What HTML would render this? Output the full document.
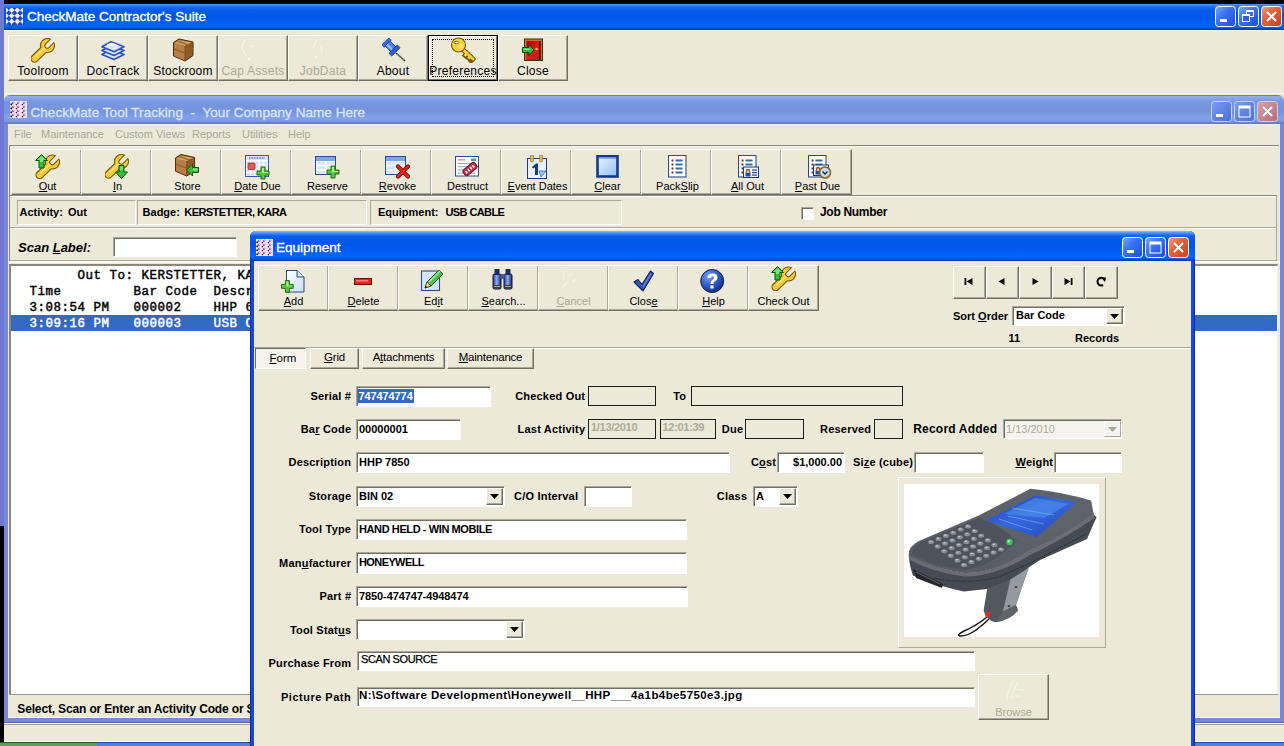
<!DOCTYPE html>
<html><head><meta charset="utf-8"><style>*{margin:0;padding:0;box-sizing:border-box}
html,body{width:1284px;height:746px;overflow:hidden;background:#000;position:relative;font-family:"Liberation Sans",sans-serif;color:#000}
.a{position:absolute}
.t{position:absolute;white-space:pre;line-height:1}
.btn{position:absolute;background:#ECE9D8;border-top:1px solid #fff;border-left:1px solid #fff;border-right:1px solid #716F64;border-bottom:1px solid #716F64;box-shadow:inset -1px -1px 0 #ACA899}
.lb{position:absolute;left:0;right:0;text-align:center;white-space:pre;line-height:1;font-size:11px}
.ic{position:absolute}
.sunk{position:absolute;background:#fff;border-top:1px solid #ACA899;border-left:1px solid #ACA899;border-right:1px solid #fff;border-bottom:1px solid #fff;box-shadow:inset 1px 1px 0 #716F64}
.panel{position:absolute;border-top:1px solid #ACA899;border-left:1px solid #ACA899;border-right:1px solid #fff;border-bottom:1px solid #fff}
.lbl{position:absolute;white-space:pre;line-height:1;font-weight:bold;font-size:11px}
.fld{position:absolute;white-space:pre;line-height:1;font-weight:bold;font-size:11px}
.u{text-decoration:underline;text-underline-offset:1px}
.mono{position:absolute;white-space:pre;line-height:1;font-family:"Liberation Mono",monospace;font-size:13.333px}
</style></head><body>
<div class="a" style="left:0px;top:0px;width:4px;height:526px;background:#6E79D6;"></div>
<div class="a" style="left:4px;top:4px;width:1280px;height:26px;background:linear-gradient(#5C9CFF 0,#2A78F8 2px,#0A5EEC 5px,#0055E5 12px,#005EF4 18px,#0066FF 22px,#0058E8 24px,#0030A0 26px);"></div>
<div class="ic" style="left:6px;top:8px"><svg width="17" height="17" viewBox="0 0 17 17" style="display:block"><defs><clipPath id="aic"><rect x="0" y="0" width="17" height="17"/></clipPath></defs><g clip-path="url(#aic)"><rect x="0" y="0" width="17" height="17" fill="#F4EEFF"/><g transform="rotate(45 8.5 8.5)"><rect x="-12.00" y="-12.00" width="4.0" height="4.0" fill="#2448C0"/><rect x="-12.00" y="-4.00" width="4.0" height="4.0" fill="#2448C0"/><rect x="-12.00" y="4.00" width="4.0" height="4.0" fill="#2448C0"/><rect x="-12.00" y="12.00" width="4.0" height="4.0" fill="#2448C0"/><rect x="-12.00" y="20.00" width="4.0" height="4.0" fill="#2448C0"/><rect x="-8.00" y="-8.00" width="4.0" height="4.0" fill="#2448C0"/><rect x="-8.00" y="0.00" width="4.0" height="4.0" fill="#2448C0"/><rect x="-8.00" y="8.00" width="4.0" height="4.0" fill="#2448C0"/><rect x="-8.00" y="16.00" width="4.0" height="4.0" fill="#2448C0"/><rect x="-8.00" y="24.00" width="4.0" height="4.0" fill="#2448C0"/><rect x="-4.00" y="-12.00" width="4.0" height="4.0" fill="#2448C0"/><rect x="-4.00" y="-4.00" width="4.0" height="4.0" fill="#2448C0"/><rect x="-4.00" y="4.00" width="4.0" height="4.0" fill="#2448C0"/><rect x="-4.00" y="12.00" width="4.0" height="4.0" fill="#2448C0"/><rect x="-4.00" y="20.00" width="4.0" height="4.0" fill="#2448C0"/><rect x="0.00" y="-8.00" width="4.0" height="4.0" fill="#2448C0"/><rect x="0.00" y="0.00" width="4.0" height="4.0" fill="#2448C0"/><rect x="0.00" y="8.00" width="4.0" height="4.0" fill="#2448C0"/><rect x="0.00" y="16.00" width="4.0" height="4.0" fill="#2448C0"/><rect x="0.00" y="24.00" width="4.0" height="4.0" fill="#2448C0"/><rect x="4.00" y="-12.00" width="4.0" height="4.0" fill="#2448C0"/><rect x="4.00" y="-4.00" width="4.0" height="4.0" fill="#2448C0"/><rect x="4.00" y="4.00" width="4.0" height="4.0" fill="#2448C0"/><rect x="4.00" y="12.00" width="4.0" height="4.0" fill="#2448C0"/><rect x="4.00" y="20.00" width="4.0" height="4.0" fill="#2448C0"/><rect x="8.00" y="-8.00" width="4.0" height="4.0" fill="#2448C0"/><rect x="8.00" y="0.00" width="4.0" height="4.0" fill="#2448C0"/><rect x="8.00" y="8.00" width="4.0" height="4.0" fill="#2448C0"/><rect x="8.00" y="16.00" width="4.0" height="4.0" fill="#2448C0"/><rect x="8.00" y="24.00" width="4.0" height="4.0" fill="#2448C0"/><rect x="12.00" y="-12.00" width="4.0" height="4.0" fill="#2448C0"/><rect x="12.00" y="-4.00" width="4.0" height="4.0" fill="#2448C0"/><rect x="12.00" y="4.00" width="4.0" height="4.0" fill="#2448C0"/><rect x="12.00" y="12.00" width="4.0" height="4.0" fill="#2448C0"/><rect x="12.00" y="20.00" width="4.0" height="4.0" fill="#2448C0"/><rect x="16.00" y="-8.00" width="4.0" height="4.0" fill="#2448C0"/><rect x="16.00" y="0.00" width="4.0" height="4.0" fill="#2448C0"/><rect x="16.00" y="8.00" width="4.0" height="4.0" fill="#2448C0"/><rect x="16.00" y="16.00" width="4.0" height="4.0" fill="#2448C0"/><rect x="16.00" y="24.00" width="4.0" height="4.0" fill="#2448C0"/><rect x="20.00" y="-12.00" width="4.0" height="4.0" fill="#2448C0"/><rect x="20.00" y="-4.00" width="4.0" height="4.0" fill="#2448C0"/><rect x="20.00" y="4.00" width="4.0" height="4.0" fill="#2448C0"/><rect x="20.00" y="12.00" width="4.0" height="4.0" fill="#2448C0"/><rect x="20.00" y="20.00" width="4.0" height="4.0" fill="#2448C0"/><rect x="24.00" y="-8.00" width="4.0" height="4.0" fill="#2448C0"/><rect x="24.00" y="0.00" width="4.0" height="4.0" fill="#2448C0"/><rect x="24.00" y="8.00" width="4.0" height="4.0" fill="#2448C0"/><rect x="24.00" y="16.00" width="4.0" height="4.0" fill="#2448C0"/><rect x="24.00" y="24.00" width="4.0" height="4.0" fill="#2448C0"/></g></g></svg></div>
<div class="t" style="left:27px;top:9.97px;font-size:13.5px;color:#fff;-webkit-text-stroke:0.35px #fff;">CheckMate Contractor's Suite</div>
<div class="ic" style="left:1215px;top:6px"><svg width="21" height="21" viewBox="0 0 21 21" style="display:block"><defs><linearGradient id="gmina" x1="0" y1="0" x2="1" y2="1"><stop offset="0" stop-color="#7AA8FF"/><stop offset="0.4" stop-color="#3A74F0"/><stop offset="1" stop-color="#1C4CD8"/></linearGradient></defs><rect x="0.5" y="0.5" width="20" height="20" rx="3" fill="url(#gmina)" stroke="#FFFFFF" stroke-width="1"/><rect x="5" y="13" width="7" height="3" fill="#fff"/></svg></div>
<div class="ic" style="left:1238px;top:6px"><svg width="21" height="21" viewBox="0 0 21 21" style="display:block"><defs><linearGradient id="grestorea" x1="0" y1="0" x2="1" y2="1"><stop offset="0" stop-color="#7AA8FF"/><stop offset="0.4" stop-color="#3A74F0"/><stop offset="1" stop-color="#1C4CD8"/></linearGradient></defs><rect x="0.5" y="0.5" width="20" height="20" rx="3" fill="url(#grestorea)" stroke="#FFFFFF" stroke-width="1"/><rect x="8.5" y="4.5" width="7" height="6" fill="none" stroke="#fff"/><rect x="8" y="4" width="8" height="2" fill="#fff"/><rect x="4.5" y="8.5" width="7" height="7" fill="#2A60E8" stroke="#fff"/><rect x="4" y="8" width="8" height="2" fill="#fff"/></svg></div>
<div class="ic" style="left:1261px;top:6px"><svg width="21" height="21" viewBox="0 0 21 21" style="display:block"><defs><linearGradient id="gclosea" x1="0" y1="0" x2="1" y2="1"><stop offset="0" stop-color="#F0A080"/><stop offset="0.4" stop-color="#E2643C"/><stop offset="1" stop-color="#C8401A"/></linearGradient></defs><rect x="0.5" y="0.5" width="20" height="20" rx="3" fill="url(#gclosea)" stroke="#FFFFFF" stroke-width="1"/><path d="M6 6 L15 15 M15 6 L6 15" stroke="#fff" stroke-width="2"/></svg></div>
<div class="a" style="left:4px;top:30px;width:1280px;height:712px;background:#ECE9D8;"></div>
<div class="a" style="left:4px;top:30px;width:1280px;height:1px;background:#F4F8FA;"></div>
<div class="btn" style="left:8px;top:35px;width:70px;height:46px"></div>
<div class="lb" style="left:8px;width:70px;top:64.84px;font-size:12px;color:#000;letter-spacing:0.25px">Toolroom</div>
<div class="ic" style="left:31px;top:37.5px"><svg width="24" height="25" viewBox="0 0 24 25" style="display:block"><defs><mask id="wmo1" maskUnits="userSpaceOnUse" x="-5" y="-5" width="40" height="40"><rect x="-5" y="-5" width="40" height="40" fill="#fff"/><path d="M17.54 9.14 A1.9 1.9 0 0 1 14.86 6.46 L23.34 -2.03 L26.03 0.66 Z" fill="#000"/></mask><mask id="wmi1" maskUnits="userSpaceOnUse" x="-5" y="-5" width="40" height="40"><rect x="-5" y="-5" width="40" height="40" fill="#fff"/><path d="M18.32 9.92 A3.0 3.0 0 0 1 14.08 5.68 L22.56 -2.81 L26.81 1.44 Z" fill="#000"/></mask></defs><g transform="translate(0,0) scale(1.0)"><g mask="url(#wmo1)"><circle cx="16.5" cy="7.5" r="7.6" fill="#7A5800"/><path d="M3.6 20.6 L14 10.5" stroke="#7A5800" stroke-width="8.4" stroke-linecap="round"/></g><g mask="url(#wmi1)"><circle cx="16.5" cy="7.5" r="6.5" fill="#F2CB3C"/><path d="M3.6 20.6 L14 10.5" stroke="#F2CB3C" stroke-width="6.0" stroke-linecap="round"/><path d="M5 18 L13 10.5" stroke="#FBE27A" stroke-width="1.6" stroke-linecap="round"/></g></g></svg></div>
<div class="btn" style="left:78px;top:35px;width:70px;height:46px"></div>
<div class="lb" style="left:78px;width:70px;top:64.84px;font-size:12px;color:#000;letter-spacing:0.25px">DocTrack</div>
<div class="ic" style="left:101px;top:41px"><svg width="24" height="20" viewBox="0 0 24 20" style="display:block"><g transform="translate(0,0)"><path d="M1 13.5 L10 8.5 L23 13.5 L13 18.5 Z" fill="#D8E8FF" stroke="#2A52B8" stroke-width="1.6" stroke-linejoin="round"/><path d="M1 9.5 L10 4.5 L23 9.5 L13 14.5 Z" fill="#D8E8FF" stroke="#2A52B8" stroke-width="1.6" stroke-linejoin="round"/><path d="M1 5.8 L10 0.8 L23 5.8 L13 10.8 Z" fill="#D8E8FF" stroke="#2A52B8" stroke-width="1.6" stroke-linejoin="round"/><path d="M6 4 L11 2.5 L17 5" stroke="#fff" stroke-width="1.5" fill="none"/></g></svg></div>
<div class="btn" style="left:148px;top:35px;width:70px;height:46px"></div>
<div class="lb" style="left:148px;width:70px;top:64.84px;font-size:12px;color:#000;letter-spacing:0.25px">Stockroom</div>
<div class="ic" style="left:173px;top:37.5px"><svg width="21" height="24" viewBox="0 0 21 24" style="display:block"><g transform="translate(0,0.5) scale(1)"><path d="M0.5 4 L6 0.5 L20 3.5 L20 17 L12 22.5 L0.5 17.5 Z" fill="#8E5A26" stroke="#4A2808" stroke-width="1"/><path d="M1 4.2 L12 8 L12 22 L1 17.2 Z" fill="#B88048"/><path d="M1.5 4.5 L6 1.5 L19 4 L12 7.5 Z" fill="#D4A468"/><path d="M12 8 L19.5 4" stroke="#7A4A18" stroke-width="1"/><path d="M12 8 L12 22" stroke="#7A4A18" stroke-width="1"/><path d="M1 10.5 L12 14.5 L20 10" stroke="#8A5A24" stroke-width="1.2" fill="none"/><path d="M4 2.5 L16 6.5" stroke="#9A6A30" stroke-width="1.5"/></g></svg></div>
<div class="btn" style="left:218px;top:35px;width:70px;height:46px"></div>
<div class="lb" style="left:218px;width:70px;top:64.84px;font-size:12px;color:#ACA899;letter-spacing:0.25px">Cap Assets</div>
<div class="ic" style="left:238px;top:37px"><svg width="26" height="26" viewBox="0 0 26 26" style="display:block"><path d="M7 3 Q3 8 5 13 Q6 17 9 19" stroke="#F6F4EC" stroke-width="1.4" fill="none"/><path d="M12 10 L16 9" stroke="#F6F4EC" stroke-width="1.2"/><circle cx="11" cy="22" r="1.2" fill="#F6F4EC"/></svg></div>
<div class="btn" style="left:288px;top:35px;width:70px;height:46px"></div>
<div class="lb" style="left:288px;width:70px;top:64.84px;font-size:12px;color:#ACA899;letter-spacing:0.25px">JobData</div>
<div class="ic" style="left:308px;top:37px"><svg width="26" height="26" viewBox="0 0 26 26" style="display:block"><path d="M9 3 Q5 7 6 12" stroke="#F6F4EC" stroke-width="1.4" fill="none"/><path d="M13 9 L14 15" stroke="#F6F4EC" stroke-width="1.2"/><circle cx="8" cy="20" r="1.2" fill="#F6F4EC"/></svg></div>
<div class="btn" style="left:358px;top:35px;width:70px;height:46px"></div>
<div class="lb" style="left:358px;width:70px;top:64.84px;font-size:12px;color:#000;letter-spacing:0.25px">About</div>
<div class="ic" style="left:382px;top:38px"><svg width="24" height="24" viewBox="0 0 24 24" style="display:block"><path d="M14 15 L23 23" stroke="#3A3A3A" stroke-width="1.6"/><path d="M15 16 L22 22" stroke="#A0A0A0" stroke-width="0.6"/><g transform="rotate(-45 9 9)"><rect x="4" y="1" width="10" height="3.5" rx="1" fill="#3E6CE0" stroke="#1A3A9A" stroke-width="0.8"/><rect x="5.5" y="4" width="7" height="8" fill="#4A7CEA" stroke="#1A3A9A" stroke-width="0.8"/><rect x="3" y="12" width="12" height="4" rx="1" fill="#2F5CD0" stroke="#1A3A9A" stroke-width="0.8"/><rect x="7" y="4.5" width="2" height="7" fill="#9EC0FF"/></g></svg></div>
<div class="btn" style="left:428px;top:35px;width:70px;height:46px;border:1px solid #000;box-shadow:inset -1px -1px 0 #716F64,inset 1px 1px 0 #fff"></div>
<div class="a" style="left:432px;top:39px;width:62px;height:38px;border:1px dotted #000"></div>
<div class="lb" style="left:428px;width:70px;top:64.84px;font-size:12px;color:#000;letter-spacing:0.25px">Preferences</div>
<div class="ic" style="left:449.5px;top:36.5px"><svg width="26" height="26" viewBox="0 0 26 26" style="display:block"><path d="M10 10 L23 22 M17 16 L15 18.5 M20 19 L18.5 21 M23 22 L21 24" stroke="#7A5A00" stroke-width="4.6" stroke-linecap="square"/><path d="M10 10 L23 22 M17 16 L15.5 18 M20 19 L19 20.5" stroke="#F4D23A" stroke-width="2.6" stroke-linecap="square"/><circle cx="8.5" cy="8" r="7" fill="#F4D23A" stroke="#7A5A00" stroke-width="1.1"/><ellipse cx="6.5" cy="5.5" rx="2.3" ry="1.3" fill="#fff" stroke="#7A5A00" stroke-width="0.8"/><circle cx="11" cy="10" r="3" fill="#FFE680" opacity="0.6"/></svg></div>
<div class="btn" style="left:498px;top:35px;width:70px;height:46px"></div>
<div class="lb" style="left:498px;width:70px;top:64.84px;font-size:12px;color:#000;letter-spacing:0.25px">Close</div>
<div class="ic" style="left:521.5px;top:38px"><svg width="24" height="24" viewBox="0 0 24 24" style="display:block"><defs><linearGradient id="dg" x1="0" y1="0" x2="1" y2="1"><stop offset="0" stop-color="#A00000"/><stop offset="0.5" stop-color="#E01818"/><stop offset="1" stop-color="#B02020"/></linearGradient></defs><rect x="2.5" y="1" width="18" height="21.5" fill="#C07820" stroke="#4A2A00" stroke-width="1"/><rect x="4.5" y="3" width="14" height="19" fill="url(#dg)"/><rect x="17" y="3" width="1.6" height="19" fill="#3A0A0A"/><circle cx="14.5" cy="11" r="1.3" fill="#FFB040"/><path d="M0.5 9.5 L7 9.5 L7 6.5 L12 12 L7 17.5 L7 14.5 L0.5 14.5 Z" fill="#3CB83C" stroke="#0A4A0A" stroke-width="1"/><path d="M1.5 10.5 L7.5 10.5 L7.5 12 L1.5 12Z" fill="#8BE88B"/></svg></div>
<div class="a" style="left:4px;top:95px;width:1280px;height:628px;background:#7A86D8;border-radius:7px 7px 0 0;"></div>
<div class="a" style="left:4px;top:93px;width:1280px;height:1px;background:#F6F6F2;"></div>
<div class="a" style="left:4px;top:95px;width:1280px;height:29px;background:linear-gradient(#6C7EAE 0,#6C7EAE 1px,#94AEEC 1px,#8AA6E8 3px,#7896DE 7px,#7694DE 17px,#80A2EA 23px,#7E9CE4 26px,#6A7AC0 28px,#6A7AC0 29px);border-radius:6px 6px 0 0;"></div>
<div class="ic" style="left:10px;top:101px"><svg width="17" height="17" viewBox="0 0 17 17" style="display:block"><rect x="0" y="0" width="17" height="17" fill="#F6DCF6"/><path d="M1 4 L4 1" stroke="#1A1030" stroke-width="1.4" stroke-dasharray="1.2 0.8"/><path d="M1 8 L4 5" stroke="#1A1030" stroke-width="1.4" stroke-dasharray="1.2 0.8"/><path d="M1 12 L4 9" stroke="#1A1030" stroke-width="1.4" stroke-dasharray="1.2 0.8"/><path d="M1 16 L4 13" stroke="#1A1030" stroke-width="1.4" stroke-dasharray="1.2 0.8"/><path d="M6 4 L9 1" stroke="#1A1030" stroke-width="1.4" stroke-dasharray="1.2 0.8"/><path d="M6 8 L9 5" stroke="#1A1030" stroke-width="1.4" stroke-dasharray="1.2 0.8"/><path d="M6 12 L9 9" stroke="#1A1030" stroke-width="1.4" stroke-dasharray="1.2 0.8"/><path d="M6 16 L9 13" stroke="#1A1030" stroke-width="1.4" stroke-dasharray="1.2 0.8"/><path d="M12 4 L15 1" stroke="#1A1030" stroke-width="1.4" stroke-dasharray="1.2 0.8"/><path d="M12 8 L15 5" stroke="#1A1030" stroke-width="1.4" stroke-dasharray="1.2 0.8"/><path d="M12 12 L15 9" stroke="#1A1030" stroke-width="1.4" stroke-dasharray="1.2 0.8"/><path d="M12 16 L15 13" stroke="#1A1030" stroke-width="1.4" stroke-dasharray="1.2 0.8"/><rect x="0.5" y="2.5" width="1.5" height="1.5" fill="#1A1030"/><rect x="0.5" y="6.5" width="1.5" height="1.5" fill="#1A1030"/><rect x="0.5" y="10.5" width="1.5" height="1.5" fill="#1A1030"/><rect x="0.5" y="14.5" width="1.5" height="1.5" fill="#1A1030"/></svg></div>
<div class="t" style="left:30.5px;top:105.77px;font-size:13.5px;color:#DCE6F8;-webkit-text-stroke:0.3px #DCE6F8;letter-spacing:0.05px;">CheckMate Tool Tracking  -  Your Company Name Here</div>
<div class="ic" style="left:1211px;top:101px"><svg width="21" height="21" viewBox="0 0 21 21" style="display:block"><defs><linearGradient id="gmini" x1="0" y1="0" x2="1" y2="1"><stop offset="0" stop-color="#7A9CF0"/><stop offset="1" stop-color="#4A6ED8"/></linearGradient></defs><rect x="0.5" y="0.5" width="20" height="20" rx="3" fill="url(#gmini)" stroke="#C8D4F4" stroke-width="1"/><rect x="5" y="13" width="7" height="3" fill="#fff"/></svg></div>
<div class="ic" style="left:1234px;top:101px"><svg width="21" height="21" viewBox="0 0 21 21" style="display:block"><defs><linearGradient id="gmaxi" x1="0" y1="0" x2="1" y2="1"><stop offset="0" stop-color="#7A9CF0"/><stop offset="1" stop-color="#4A6ED8"/></linearGradient></defs><rect x="0.5" y="0.5" width="20" height="20" rx="3" fill="url(#gmaxi)" stroke="#C8D4F4" stroke-width="1"/><rect x="5" y="5" width="11" height="11" fill="none" stroke="#fff" stroke-width="1"/><rect x="5" y="5" width="11" height="2.5" fill="#fff"/></svg></div>
<div class="ic" style="left:1257px;top:101px"><svg width="21" height="21" viewBox="0 0 21 21" style="display:block"><defs><linearGradient id="gclosei" x1="0" y1="0" x2="1" y2="1"><stop offset="0" stop-color="#D8A0A8"/><stop offset="1" stop-color="#B86A78"/></linearGradient></defs><rect x="0.5" y="0.5" width="20" height="20" rx="3" fill="url(#gclosei)" stroke="#C8D4F4" stroke-width="1"/><path d="M6 6 L15 15 M15 6 L6 15" stroke="#fff" stroke-width="2"/></svg></div>
<div class="a" style="left:8px;top:124px;width:1272px;height:594px;background:#ECE9D8;"></div>
<div class="a" style="left:8px;top:124px;width:1272px;height:1px;background:#EEF0F6;"></div>
<div class="t" style="left:14px;top:128.59px;font-size:11px;color:#A9A79C;">File</div>
<div class="t" style="left:41px;top:128.59px;font-size:11px;color:#A9A79C;">Maintenance</div>
<div class="t" style="left:115px;top:128.59px;font-size:11px;color:#A9A79C;">Custom Views</div>
<div class="t" style="left:192px;top:128.59px;font-size:11px;color:#A9A79C;">Reports</div>
<div class="t" style="left:242px;top:128.59px;font-size:11px;color:#A9A79C;">Utilities</div>
<div class="t" style="left:288px;top:128.59px;font-size:11px;color:#A9A79C;">Help</div>
<div class="a" style="left:9px;top:145px;width:1270px;height:1px;background:#8A877A;"></div>
<div class="a" style="left:9px;top:145px;width:1px;height:117px;background:#8A877A;"></div>
<div class="a" style="left:10px;top:146px;width:1268px;height:1px;background:#F6F4EC;"></div>
<div class="btn" style="left:11px;top:149px;width:71px;height:46px"></div>
<div class="lb" style="left:12px;width:71px;top:181.29px"><span class="u">O</span>ut</div>
<div class="ic" style="left:35px;top:153.5px"><svg width="25" height="25" viewBox="0 0 25 25" style="display:block"><defs><mask id="wmo2" maskUnits="userSpaceOnUse" x="-5" y="-5" width="40" height="40"><rect x="-5" y="-5" width="40" height="40" fill="#fff"/><path d="M17.54 9.14 A1.9 1.9 0 0 1 14.86 6.46 L23.34 -2.03 L26.03 0.66 Z" fill="#000"/></mask><mask id="wmi2" maskUnits="userSpaceOnUse" x="-5" y="-5" width="40" height="40"><rect x="-5" y="-5" width="40" height="40" fill="#fff"/><path d="M18.32 9.92 A3.0 3.0 0 0 1 14.08 5.68 L22.56 -2.81 L26.81 1.44 Z" fill="#000"/></mask></defs><g transform="translate(1,0.5) scale(1.0)"><g mask="url(#wmo2)"><circle cx="16.5" cy="7.5" r="7.6" fill="#7A5800"/><path d="M3.6 20.6 L14 10.5" stroke="#7A5800" stroke-width="8.4" stroke-linecap="round"/></g><g mask="url(#wmi2)"><circle cx="16.5" cy="7.5" r="6.5" fill="#F2CB3C"/><path d="M3.6 20.6 L14 10.5" stroke="#F2CB3C" stroke-width="6.0" stroke-linecap="round"/><path d="M5 18 L13 10.5" stroke="#FBE27A" stroke-width="1.6" stroke-linecap="round"/></g></g><g transform="translate(0,0)"><path d="M6.5 0.5 L12.5 6.5 L9 6.5 L9 14 L4 14 L4 6.5 L0.5 6.5 Z" fill="#3CB83C" stroke="#0A5A0A" stroke-width="1"/><path d="M6.5 2 L10.5 6 L8 6 L8 8 L5 8 L5 6 L2.5 6Z" fill="#7BE07B"/></g></svg></div>
<div class="btn" style="left:81px;top:149px;width:71px;height:46px"></div>
<div class="lb" style="left:82px;width:71px;top:181.29px"><span class="u">I</span>n</div>
<div class="ic" style="left:105px;top:153.5px"><svg width="25" height="25" viewBox="0 0 25 25" style="display:block"><defs><mask id="wmo4" maskUnits="userSpaceOnUse" x="-5" y="-5" width="40" height="40"><rect x="-5" y="-5" width="40" height="40" fill="#fff"/><path d="M17.54 9.14 A1.9 1.9 0 0 1 14.86 6.46 L23.34 -2.03 L26.03 0.66 Z" fill="#000"/></mask><mask id="wmi4" maskUnits="userSpaceOnUse" x="-5" y="-5" width="40" height="40"><rect x="-5" y="-5" width="40" height="40" fill="#fff"/><path d="M18.32 9.92 A3.0 3.0 0 0 1 14.08 5.68 L22.56 -2.81 L26.81 1.44 Z" fill="#000"/></mask></defs><g transform="translate(0,0) scale(1.0)"><g mask="url(#wmo4)"><circle cx="16.5" cy="7.5" r="7.6" fill="#7A5800"/><path d="M3.6 20.6 L14 10.5" stroke="#7A5800" stroke-width="8.4" stroke-linecap="round"/></g><g mask="url(#wmi4)"><circle cx="16.5" cy="7.5" r="6.5" fill="#F2CB3C"/><path d="M3.6 20.6 L14 10.5" stroke="#F2CB3C" stroke-width="6.0" stroke-linecap="round"/><path d="M5 18 L13 10.5" stroke="#FBE27A" stroke-width="1.6" stroke-linecap="round"/></g></g><g transform="translate(10,11)"><path d="M4 0.5 L9 0.5 L9 7 L12.5 7 L6.5 13.5 L0.5 7 L4 7 Z" fill="#3CB83C" stroke="#0A5A0A" stroke-width="1"/><path d="M5 1.5 L8 1.5 L8 5 L5 5Z" fill="#7BE07B"/></g></svg></div>
<div class="btn" style="left:151px;top:149px;width:71px;height:46px"></div>
<div class="lb" style="left:152px;width:71px;top:181.29px">Store</div>
<div class="ic" style="left:175px;top:154px"><svg width="25" height="24" viewBox="0 0 25 24" style="display:block"><g transform="translate(0,0) scale(0.98)"><path d="M0.5 4 L6 0.5 L20 3.5 L20 17 L12 22.5 L0.5 17.5 Z" fill="#8E5A26" stroke="#4A2808" stroke-width="1"/><path d="M1 4.2 L12 8 L12 22 L1 17.2 Z" fill="#B88048"/><path d="M1.5 4.5 L6 1.5 L19 4 L12 7.5 Z" fill="#D4A468"/><path d="M12 8 L19.5 4" stroke="#7A4A18" stroke-width="1"/><path d="M12 8 L12 22" stroke="#7A4A18" stroke-width="1"/><path d="M1 10.5 L12 14.5 L20 10" stroke="#8A5A24" stroke-width="1.2" fill="none"/><path d="M4 2.5 L16 6.5" stroke="#9A6A30" stroke-width="1.5"/></g><g transform="translate(11,9.5)"><path d="M0.5 6.5 L6.5 0.5 L6.5 4 L12.5 4 L12.5 9 L6.5 9 L6.5 12.5 Z" fill="#3CB83C" stroke="#0A5A0A" stroke-width="1"/><path d="M7 5 L11.5 5 L11.5 7 L7 7Z" fill="#8BE88B"/></g></svg></div>
<div class="btn" style="left:221px;top:149px;width:71px;height:46px"></div>
<div class="lb" style="left:222px;width:71px;top:181.29px"><span class="u">D</span>ate Due</div>
<div class="ic" style="left:244.5px;top:154.5px"><svg width="25" height="25" viewBox="0 0 25 25" style="display:block"><rect x="0.5" y="0.5" width="23" height="21" fill="#fff" stroke="#2B5CB8"/><rect x="1" y="1" width="22" height="4" fill="#D4E4FA"/><path d="M4 3 L20 3" stroke="#2A4A8A" stroke-width="1.2" stroke-dasharray="1 0.6"/><rect x="1.5" y="6.5" width="3.4" height="2.8" fill="#CFE0FA"/><rect x="5.9" y="6.5" width="3.4" height="2.8" fill="#CFE0FA"/><rect x="10.3" y="6.5" width="3.4" height="2.8" fill="#CFE0FA"/><rect x="14.700000000000001" y="6.5" width="3.4" height="2.8" fill="#CFE0FA"/><rect x="19.1" y="6.5" width="3.4" height="2.8" fill="#CFE0FA"/><rect x="1.5" y="10.3" width="3.4" height="2.8" fill="#CFE0FA"/><rect x="5.9" y="10.3" width="3.4" height="2.8" fill="#CFE0FA"/><rect x="10.3" y="10.3" width="3.4" height="2.8" fill="#CFE0FA"/><rect x="14.700000000000001" y="10.3" width="3.4" height="2.8" fill="#CFE0FA"/><rect x="19.1" y="10.3" width="3.4" height="2.8" fill="#CFE0FA"/><rect x="1.5" y="14.1" width="3.4" height="2.8" fill="#CFE0FA"/><rect x="5.9" y="14.1" width="3.4" height="2.8" fill="#CFE0FA"/><rect x="10.3" y="14.1" width="3.4" height="2.8" fill="#CFE0FA"/><rect x="14.700000000000001" y="14.1" width="3.4" height="2.8" fill="#CFE0FA"/><rect x="19.1" y="14.1" width="3.4" height="2.8" fill="#CFE0FA"/><rect x="1.5" y="17.9" width="3.4" height="2.8" fill="#CFE0FA"/><rect x="5.9" y="17.9" width="3.4" height="2.8" fill="#CFE0FA"/><rect x="10.3" y="17.9" width="3.4" height="2.8" fill="#CFE0FA"/><rect x="14.700000000000001" y="17.9" width="3.4" height="2.8" fill="#CFE0FA"/><rect x="19.1" y="17.9" width="3.4" height="2.8" fill="#CFE0FA"/><rect x="3" y="8" width="7" height="6.5" rx="1" fill="#E06058" stroke="#9A2A2A" stroke-width="0.8"/><g transform="translate(11.5,11.5) scale(1)"><path d="M4.5 0.5 L8.5 0.5 L8.5 4.5 L12.5 4.5 L12.5 8.5 L8.5 8.5 L8.5 12.5 L4.5 12.5 L4.5 8.5 L0.5 8.5 L0.5 4.5 L4.5 4.5 Z" fill="#5CC840" stroke="#1E6A10" stroke-width="1"/><path d="M5.5 1.5 L7.5 1.5 L7.5 5.5 L11.5 5.5 L11.5 6.5 L5.5 6.5Z" fill="#A8F088"/></g></svg></div>
<div class="btn" style="left:291px;top:149px;width:71px;height:46px"></div>
<div class="lb" style="left:292px;width:71px;top:181.29px">Reserve</div>
<div class="ic" style="left:314.5px;top:154.5px"><svg width="25" height="25" viewBox="0 0 25 25" style="display:block"><g transform="translate(0,1)"><rect x="0.5" y="0.5" width="20" height="18" fill="#FFFFFF" stroke="#2B4C8C" stroke-width="1"/><rect x="1" y="1" width="19" height="4" fill="#7FA6E0"/><rect x="1.5" y="5.5" width="8.5" height="3.166666666666667" fill="#D8E6FA"/><rect x="11.5" y="5.5" width="8.5" height="3.166666666666667" fill="#D8E6FA"/><rect x="1.5" y="10.166666666666668" width="8.5" height="3.166666666666667" fill="#D8E6FA"/><rect x="11.5" y="10.166666666666668" width="8.5" height="3.166666666666667" fill="#D8E6FA"/><rect x="1.5" y="14.833333333333334" width="8.5" height="3.166666666666667" fill="#D8E6FA"/><rect x="11.5" y="14.833333333333334" width="8.5" height="3.166666666666667" fill="#D8E6FA"/></g><g transform="translate(11.5,10.5) scale(1)"><path d="M4.5 0.5 L8.5 0.5 L8.5 4.5 L12.5 4.5 L12.5 8.5 L8.5 8.5 L8.5 12.5 L4.5 12.5 L4.5 8.5 L0.5 8.5 L0.5 4.5 L4.5 4.5 Z" fill="#5CC840" stroke="#1E6A10" stroke-width="1"/><path d="M5.5 1.5 L7.5 1.5 L7.5 5.5 L11.5 5.5 L11.5 6.5 L5.5 6.5Z" fill="#A8F088"/></g></svg></div>
<div class="btn" style="left:361px;top:149px;width:71px;height:46px"></div>
<div class="lb" style="left:362px;width:71px;top:181.29px"><span class="u">R</span>evoke</div>
<div class="ic" style="left:384.5px;top:154.5px"><svg width="25" height="25" viewBox="0 0 25 25" style="display:block"><g transform="translate(0,1)"><rect x="0.5" y="0.5" width="20" height="18" fill="#FFFFFF" stroke="#2B4C8C" stroke-width="1"/><rect x="1" y="1" width="19" height="4" fill="#7FA6E0"/><rect x="1.5" y="5.5" width="8.5" height="3.166666666666667" fill="#D8E6FA"/><rect x="11.5" y="5.5" width="8.5" height="3.166666666666667" fill="#D8E6FA"/><rect x="1.5" y="10.166666666666668" width="8.5" height="3.166666666666667" fill="#D8E6FA"/><rect x="11.5" y="10.166666666666668" width="8.5" height="3.166666666666667" fill="#D8E6FA"/><rect x="1.5" y="14.833333333333334" width="8.5" height="3.166666666666667" fill="#D8E6FA"/><rect x="11.5" y="14.833333333333334" width="8.5" height="3.166666666666667" fill="#D8E6FA"/></g><path d="M13 11.5 L23 21.5 M23 11.5 L13 21.5" stroke="#8A0A0A" stroke-width="4.2" stroke-linecap="round"/><path d="M13 11.5 L23 21.5 M23 11.5 L13 21.5" stroke="#E02A1A" stroke-width="2.4" stroke-linecap="round"/></svg></div>
<div class="btn" style="left:431px;top:149px;width:71px;height:46px"></div>
<div class="lb" style="left:432px;width:71px;top:181.29px">Destruct</div>
<div class="ic" style="left:455px;top:155.5px"><svg width="25" height="22" viewBox="0 0 25 22" style="display:block"><rect x="0.5" y="0.5" width="23" height="19.5" fill="#fff" stroke="#2B4C8C"/><rect x="3" y="3" width="7" height="1.5" fill="#F0A050"/><rect x="16" y="2.5" width="5" height="2.5" fill="#6A8AC8"/><rect x="3" y="7.0" width="17" height="1" fill="#8AA0C8"/><rect x="3" y="10.2" width="17" height="1" fill="#8AA0C8"/><rect x="3" y="13.4" width="17" height="1" fill="#8AA0C8"/><rect x="3" y="16.6" width="17" height="1" fill="#8AA0C8"/><g transform="rotate(-40 15 13)"><rect x="7.5" y="9.5" width="15" height="7" rx="2" fill="#C03040" stroke="#6A1020" stroke-width="1"/><rect x="9.5" y="11.5" width="1.5" height="3" fill="#fff"/><rect x="12.5" y="11.5" width="1.5" height="3" fill="#fff"/><rect x="15.5" y="11.5" width="1.5" height="3" fill="#fff"/><rect x="18.5" y="11.5" width="1.5" height="3" fill="#fff"/></g></svg></div>
<div class="btn" style="left:501px;top:149px;width:71px;height:46px"></div>
<div class="lb" style="left:502px;width:71px;top:181.29px"><span class="u">E</span>vent Dates</div>
<div class="ic" style="left:525.5px;top:154.5px"><svg width="25" height="25" viewBox="0 0 25 25" style="display:block"><rect x="1.5" y="3.5" width="19" height="20" fill="#E8F0FF" stroke="#1E3A78" stroke-width="1"/><rect x="4.5" y="0" width="3" height="7" rx="1" fill="#E8C040" stroke="#8A6A10" stroke-width="0.6"/><rect x="13.5" y="0" width="3" height="7" rx="1" fill="#E8C040" stroke="#8A6A10" stroke-width="0.6"/><path d="M6 12 L10 8.5 L12 8.5 L12 20 L9 20 L9 12.5 L7 13.5Z" fill="#1A3A8A"/><path d="M13 16 L20 16 L15 22 Z" fill="#9AC8F0" stroke="#2A5AA8" stroke-width="0.7"/></svg></div>
<div class="btn" style="left:571px;top:149px;width:71px;height:46px"></div>
<div class="lb" style="left:572px;width:71px;top:181.29px"><span class="u">C</span>lear</div>
<div class="ic" style="left:595.5px;top:154.5px"><svg width="24" height="24" viewBox="0 0 24 24" style="display:block"><defs><linearGradient id="clg" x1="0" y1="0" x2="1" y2="1"><stop offset="0" stop-color="#F0F6FF"/><stop offset="1" stop-color="#8CBEF4"/></linearGradient></defs><rect x="1.5" y="1" width="20" height="20.5" fill="url(#clg)" stroke="#143A8A" stroke-width="2.6"/><rect x="3" y="2.5" width="17" height="1" fill="#4A74C8"/></svg></div>
<div class="btn" style="left:641px;top:149px;width:71px;height:46px"></div>
<div class="lb" style="left:642px;width:71px;top:181.29px">Pack<span class="u">S</span>lip</div>
<div class="ic" style="left:667.5px;top:154.5px"><svg width="24" height="24" viewBox="0 0 24 24" style="display:block"><g transform="translate(0,0)"><rect x="0.5" y="0.5" width="17.5" height="21.5" fill="#fff" stroke="#2B4C8C" stroke-width="1.1"/><rect x="3.5" y="4.5" width="2" height="2" fill="#6A3A3A"/><rect x="7.5" y="4.5" width="7" height="2" fill="#3A6A98"/><rect x="3.5" y="8.5" width="2" height="2" fill="#6A3A3A"/><rect x="7.5" y="8.5" width="7" height="2" fill="#3A6A98"/><rect x="3.5" y="12.5" width="2" height="2" fill="#6A3A3A"/><rect x="7.5" y="12.5" width="7" height="2" fill="#3A6A98"/><rect x="3.5" y="16.5" width="2" height="2" fill="#6A3A3A"/><rect x="7.5" y="16.5" width="7" height="2" fill="#3A6A98"/></g></svg></div>
<div class="btn" style="left:711px;top:149px;width:71px;height:46px"></div>
<div class="lb" style="left:712px;width:71px;top:181.29px"><span class="u">A</span>ll Out</div>
<div class="ic" style="left:737.5px;top:154.5px"><svg width="25" height="24" viewBox="0 0 25 24" style="display:block"><g transform="translate(0,0)"><rect x="0.5" y="0.5" width="17.5" height="21.5" fill="#fff" stroke="#2B4C8C" stroke-width="1.1"/><rect x="3.5" y="4.5" width="2" height="2" fill="#6A3A3A"/><rect x="7.5" y="4.5" width="7" height="2" fill="#3A6A98"/><rect x="3.5" y="8.5" width="2" height="2" fill="#6A3A3A"/><rect x="7.5" y="8.5" width="7" height="2" fill="#3A6A98"/><rect x="3.5" y="12.5" width="2" height="2" fill="#6A3A3A"/><rect x="7.5" y="12.5" width="7" height="2" fill="#3A6A98"/><rect x="3.5" y="16.5" width="2" height="2" fill="#6A3A3A"/><rect x="7.5" y="16.5" width="7" height="2" fill="#3A6A98"/></g><g transform="translate(5,11.5)"><rect x="0.5" y="0.5" width="15" height="10.5" fill="#EAF2FF" stroke="#1E3A78" stroke-width="1"/><circle cx="5" cy="4.5" r="2.2" fill="#8A5A20"/><rect x="2.5" y="6" width="5" height="4" fill="#2A4A9A"/><rect x="4" y="4" width="2" height="2.5" fill="#F0C080"/><rect x="9" y="3" width="5" height="1.2" fill="#2A4A9A"/><rect x="9" y="5.5" width="5" height="1.2" fill="#2A4A9A"/><rect x="9" y="8" width="5" height="1.2" fill="#2A4A9A"/></g></svg></div>
<div class="btn" style="left:781px;top:149px;width:71px;height:46px"></div>
<div class="lb" style="left:782px;width:71px;top:181.29px"><span class="u">P</span>ast Due</div>
<div class="ic" style="left:807.5px;top:154.5px"><svg width="25" height="24" viewBox="0 0 25 24" style="display:block"><g transform="translate(0,0)"><rect x="0.5" y="0.5" width="17.5" height="21.5" fill="#fff" stroke="#2B4C8C" stroke-width="1.1"/><rect x="3.5" y="4.5" width="2" height="2" fill="#6A3A3A"/><rect x="7.5" y="4.5" width="7" height="2" fill="#3A6A98"/><rect x="3.5" y="8.5" width="2" height="2" fill="#6A3A3A"/><rect x="7.5" y="8.5" width="7" height="2" fill="#3A6A98"/><rect x="3.5" y="12.5" width="2" height="2" fill="#6A3A3A"/><rect x="7.5" y="12.5" width="7" height="2" fill="#3A6A98"/><rect x="3.5" y="16.5" width="2" height="2" fill="#6A3A3A"/><rect x="7.5" y="16.5" width="7" height="2" fill="#3A6A98"/></g><g transform="translate(5,9.5)"><rect x="0.5" y="0.5" width="15" height="10.5" fill="#EAF2FF" stroke="#1E3A78" stroke-width="1"/><circle cx="5" cy="4.5" r="2.2" fill="#8A5A20"/><rect x="2.5" y="6" width="5" height="4" fill="#2A4A9A"/><rect x="4" y="4" width="2" height="2.5" fill="#F0C080"/><rect x="9" y="3" width="5" height="1.2" fill="#2A4A9A"/><rect x="9" y="5.5" width="5" height="1.2" fill="#2A4A9A"/><rect x="9" y="8" width="5" height="1.2" fill="#2A4A9A"/></g><circle cx="17" cy="17.5" r="5.5" fill="#C8D8F0" stroke="#8A6A10" stroke-width="1.6"/><path d="M14.5 16.5 L17 19 L19.5 16.5" stroke="#1A2A5A" stroke-width="1.3" fill="none"/></svg></div>
<div class="a" style="left:10px;top:195px;width:1267px;height:1px;background:#8A877A;"></div>
<div class="a" style="left:10px;top:196px;width:1267px;height:1px;background:#FFFFFF;"></div>
<div class="panel" style="left:17px;top:200px;width:119px;height:25px"></div>
<div class="panel" style="left:137px;top:200px;width:230px;height:25px"></div>
<div class="panel" style="left:370px;top:200px;width:252px;height:25px"></div>
<div class="t" style="left:19.5px;top:206.69px;font-size:11px;font-weight:bold;">Activity:</div>
<div class="t" style="left:68px;top:206.69px;font-size:11px;font-weight:bold;">Out</div>
<div class="t" style="left:142.6px;top:206.69px;font-size:11px;font-weight:bold;">Badge:</div>
<div class="t" style="left:184.3px;top:206.69px;font-size:11px;font-weight:bold;letter-spacing:-0.57px;">KERSTETTER, KARA</div>
<div class="t" style="left:378px;top:206.69px;font-size:11px;font-weight:bold;">Equipment:</div>
<div class="t" style="left:445.5px;top:206.69px;font-size:11px;font-weight:bold;letter-spacing:-0.6px;">USB CABLE</div>
<div class="a" style="left:801px;top:207px;width:13px;height:13px;background:#fff;border:1px solid #1C5180;border-color:#ACA899 #fff #fff #ACA899;box-shadow:inset 1px 1px 0 #716F64"></div>
<div class="t" style="left:820px;top:206.04px;font-size:12px;font-weight:bold;letter-spacing:-0.3px;">Job Number</div>
<div class="a" style="left:10px;top:227px;width:1267px;height:1px;background:#ACA899;"></div>
<div class="a" style="left:10px;top:228px;width:1267px;height:1px;background:#fff;"></div>
<div class="a" style="left:1276px;top:196px;width:1px;height:65px;background:#ACA899;"></div>
<div class="t" style="left:18px;top:241.0px;font-size:13px;font-weight:bold;font-style:italic;">Scan <span class="u">L</span>abel:</div>
<div class="sunk" style="left:113px;top:237px;width:124px;height:20px"></div>
<div class="a" style="left:10px;top:260px;width:1267px;height:1px;background:#ACA899;"></div>
<div class="a" style="left:8px;top:261px;width:1272px;height:2px;background:#FAF9F4;"></div>
<div class="a" style="left:9px;top:264px;width:1269px;height:431px;background:#fff;border-top:2px solid #8A877A;border-left:2px solid #8A877A;border-right:1px solid #F4F3EE;border-bottom:1px solid #F4F3EE"></div>
<div class="a" style="left:9px;top:694px;width:1269px;height:1px;background:#9A988C;"></div>
<div class="a" style="left:11px;top:315px;width:1266px;height:16px;background:#316AC5;"></div>
<div class="mono" style="left:29.5px;top:268px;color:#000;line-height:16px;font-size:12.5px;letter-spacing:0.5px;-webkit-text-stroke:0.45px currentColor">      Out To: KERSTETTER, KARA
Time         Bar Code  Description
3:08:54 PM   000002    HHP 6100
<span style="color:#fff">3:09:16 PM   000003    USB CABLE</span></div>
<div class="t" style="left:17.3px;top:703.44px;font-size:12px;font-weight:bold;letter-spacing:-0.15px;">Select, Scan or Enter an Activity Code or Scan a Badge</div>
<div class="a" style="left:8px;top:717px;width:1272px;height:1px;background:#F8F7F2;"></div>
<div class="a" style="left:4px;top:722px;width:1280px;height:1px;background:#5A66B8;"></div>
<div class="a" style="left:4px;top:723px;width:1280px;height:1px;background:#F4F4F8;"></div>
<div class="a" style="left:4px;top:724px;width:1280px;height:1px;background:#A8A698;"></div>
<div class="a" style="left:4px;top:725px;width:1280px;height:16px;background:#ECE9D8;"></div>
<div class="a" style="left:4px;top:741px;width:1280px;height:1px;background:#FFFFFF;"></div>
<div class="a" style="left:0px;top:742px;width:97px;height:4px;background:#4EA850;"></div>
<div class="a" style="left:97px;top:742px;width:1187px;height:4px;background:#3F86E6;"></div>
<div class="a" style="left:0px;top:742px;width:1284px;height:1px;background:#2A5A2A;"></div>
<div class="a" style="left:97px;top:742px;width:1187px;height:1px;background:#1A4AB0;"></div>
<div class="a" style="left:250px;top:231px;width:945px;height:515px;background:#1A48DC;border-radius:6px 6px 0 0;border-left:1px solid #0A2AA0;border-right:1px solid #0A2AA0;"></div>
<div class="a" style="left:250px;top:231px;width:945px;height:30px;background:linear-gradient(#8CC0FF 0,#4A90FF 2px,#0A5EEC 5px,#0055E5 12px,#005CF2 20px,#0066FF 25px,#0058E8 28px,#0030A0 30px);border-radius:6px 6px 0 0;"></div>
<div class="ic" style="left:256px;top:239px"><svg width="17" height="17" viewBox="0 0 17 17" style="display:block"><rect x="0" y="0" width="17" height="17" fill="#F6DCF6"/><path d="M1 4 L4 1" stroke="#1A1030" stroke-width="1.4" stroke-dasharray="1.2 0.8"/><path d="M1 8 L4 5" stroke="#1A1030" stroke-width="1.4" stroke-dasharray="1.2 0.8"/><path d="M1 12 L4 9" stroke="#1A1030" stroke-width="1.4" stroke-dasharray="1.2 0.8"/><path d="M1 16 L4 13" stroke="#1A1030" stroke-width="1.4" stroke-dasharray="1.2 0.8"/><path d="M6 4 L9 1" stroke="#1A1030" stroke-width="1.4" stroke-dasharray="1.2 0.8"/><path d="M6 8 L9 5" stroke="#1A1030" stroke-width="1.4" stroke-dasharray="1.2 0.8"/><path d="M6 12 L9 9" stroke="#1A1030" stroke-width="1.4" stroke-dasharray="1.2 0.8"/><path d="M6 16 L9 13" stroke="#1A1030" stroke-width="1.4" stroke-dasharray="1.2 0.8"/><path d="M12 4 L15 1" stroke="#1A1030" stroke-width="1.4" stroke-dasharray="1.2 0.8"/><path d="M12 8 L15 5" stroke="#1A1030" stroke-width="1.4" stroke-dasharray="1.2 0.8"/><path d="M12 12 L15 9" stroke="#1A1030" stroke-width="1.4" stroke-dasharray="1.2 0.8"/><path d="M12 16 L15 13" stroke="#1A1030" stroke-width="1.4" stroke-dasharray="1.2 0.8"/><rect x="0.5" y="2.5" width="1.5" height="1.5" fill="#1A1030"/><rect x="0.5" y="6.5" width="1.5" height="1.5" fill="#1A1030"/><rect x="0.5" y="10.5" width="1.5" height="1.5" fill="#1A1030"/><rect x="0.5" y="14.5" width="1.5" height="1.5" fill="#1A1030"/></svg></div>
<div class="t" style="left:276px;top:241.17px;font-size:13.5px;color:#fff;-webkit-text-stroke:0.35px #fff;">Equipment</div>
<div class="ic" style="left:1122px;top:237px"><svg width="21" height="21" viewBox="0 0 21 21" style="display:block"><defs><linearGradient id="gmina" x1="0" y1="0" x2="1" y2="1"><stop offset="0" stop-color="#7AA8FF"/><stop offset="0.4" stop-color="#3A74F0"/><stop offset="1" stop-color="#1C4CD8"/></linearGradient></defs><rect x="0.5" y="0.5" width="20" height="20" rx="3" fill="url(#gmina)" stroke="#FFFFFF" stroke-width="1"/><rect x="5" y="13" width="7" height="3" fill="#fff"/></svg></div>
<div class="ic" style="left:1145px;top:237px"><svg width="21" height="21" viewBox="0 0 21 21" style="display:block"><defs><linearGradient id="gmaxa" x1="0" y1="0" x2="1" y2="1"><stop offset="0" stop-color="#7AA8FF"/><stop offset="0.4" stop-color="#3A74F0"/><stop offset="1" stop-color="#1C4CD8"/></linearGradient></defs><rect x="0.5" y="0.5" width="20" height="20" rx="3" fill="url(#gmaxa)" stroke="#FFFFFF" stroke-width="1"/><rect x="5" y="5" width="11" height="11" fill="none" stroke="#fff" stroke-width="1"/><rect x="5" y="5" width="11" height="2.5" fill="#fff"/></svg></div>
<div class="ic" style="left:1168px;top:237px"><svg width="21" height="21" viewBox="0 0 21 21" style="display:block"><defs><linearGradient id="gclosea" x1="0" y1="0" x2="1" y2="1"><stop offset="0" stop-color="#F0A080"/><stop offset="0.4" stop-color="#E2643C"/><stop offset="1" stop-color="#C8401A"/></linearGradient></defs><rect x="0.5" y="0.5" width="20" height="20" rx="3" fill="url(#gclosea)" stroke="#FFFFFF" stroke-width="1"/><path d="M6 6 L15 15 M15 6 L6 15" stroke="#fff" stroke-width="2"/></svg></div>
<div class="a" style="left:254px;top:261px;width:937px;height:485px;background:#ECE9D8;"></div>
<div class="btn" style="left:258px;top:265px;width:71px;height:46px"></div>
<div class="lb" style="left:258px;width:71px;top:295.69px;color:#000"><span class="u">A</span>dd</div>
<div class="ic" style="left:281px;top:268px"><svg width="25" height="25" viewBox="0 0 25 25" style="display:block"><defs><linearGradient id="adg" x1="0" y1="0" x2="1" y2="1"><stop offset="0" stop-color="#fff"/><stop offset="1" stop-color="#C8DEFA"/></linearGradient></defs><path d="M5.5 2.5 L16 2.5 L23 9 L23 24 L5.5 24 Z" fill="url(#adg)" stroke="#2A4A8A" stroke-width="1"/><path d="M16 2.5 L16 9 L23 9" fill="#D8E8FA" stroke="#2A4A8A" stroke-width="1"/><g transform="translate(0,12) scale(0.98)"><path d="M4.5 0.5 L8.5 0.5 L8.5 4.5 L12.5 4.5 L12.5 8.5 L8.5 8.5 L8.5 12.5 L4.5 12.5 L4.5 8.5 L0.5 8.5 L0.5 4.5 L4.5 4.5 Z" fill="#5CC840" stroke="#1E6A10" stroke-width="1"/><path d="M5.5 1.5 L7.5 1.5 L7.5 5.5 L11.5 5.5 L11.5 6.5 L5.5 6.5Z" fill="#A8F088"/></g></svg></div>
<div class="btn" style="left:328px;top:265px;width:71px;height:46px"></div>
<div class="lb" style="left:328px;width:71px;top:295.69px;color:#000"><span class="u">D</span>elete</div>
<div class="ic" style="left:354px;top:277.5px"><svg width="19" height="8" viewBox="0 0 19 8" style="display:block"><rect x="0.5" y="0.5" width="17" height="6" fill="#E02A20" stroke="#7A0A0A" stroke-width="1"/><rect x="2" y="2" width="12" height="1.5" fill="#F88070"/></svg></div>
<div class="btn" style="left:398px;top:265px;width:71px;height:46px"></div>
<div class="lb" style="left:398px;width:71px;top:295.69px;color:#000">Ed<span class="u">i</span>t</div>
<div class="ic" style="left:420px;top:267px"><svg width="25" height="25" viewBox="0 0 25 25" style="display:block"><rect x="1.5" y="4" width="18" height="19.5" fill="#D4E6FA" stroke="#2A4A8A" stroke-width="1.1"/><path d="M5 21 L7 15 L19 3 L23 7 L11 19 Z" fill="#4EBE4E" stroke="#1A5A1A" stroke-width="1"/><path d="M7 15 L11 19 L5 21Z" fill="#F0E0A0" stroke="#5A4A1A" stroke-width="0.8"/><path d="M5 21 L5.8 18.8 L7.2 20.2Z" fill="#000"/><path d="M9 15 L20 4" stroke="#A0F0A0" stroke-width="1.2"/></svg></div>
<div class="btn" style="left:468px;top:265px;width:71px;height:46px"></div>
<div class="lb" style="left:468px;width:71px;top:295.69px;color:#000"><span class="u">S</span>earch...</div>
<div class="ic" style="left:492px;top:268px"><svg width="22" height="22" viewBox="0 0 22 22" style="display:block"><defs><linearGradient id="bng" x1="0" y1="0" x2="1" y2="0"><stop offset="0" stop-color="#2A3A8A"/><stop offset="0.45" stop-color="#8AAAF0"/><stop offset="1" stop-color="#1A2A6A"/></linearGradient></defs><rect x="1" y="6" width="8" height="15" rx="1.5" fill="url(#bng)" stroke="#0A1030" stroke-width="1"/><rect x="12" y="6" width="8" height="15" rx="1.5" fill="url(#bng)" stroke="#0A1030" stroke-width="1"/><rect x="2.5" y="1" width="5" height="6" fill="#1A2A5A"/><rect x="13.5" y="1" width="5" height="6" fill="#1A2A5A"/><rect x="8.5" y="6" width="4" height="5" fill="#4A5A8A"/><rect x="1.5" y="17" width="7" height="3.5" fill="#3A3A3A"/><rect x="12.5" y="17" width="7" height="3.5" fill="#3A3A3A"/><rect x="2" y="18" width="6" height="1" fill="#aaa"/><rect x="13" y="18" width="6" height="1" fill="#aaa"/></svg></div>
<div class="btn" style="left:538px;top:265px;width:71px;height:46px"></div>
<div class="lb" style="left:538px;width:71px;top:295.69px;color:#ACA899"><span class="u">C</span>ancel</div>
<div class="ic" style="left:558px;top:268px"><svg width="26" height="26" viewBox="0 0 26 26" style="display:block"><g opacity="0.75"><path d="M7 3 Q4 8 6 12" stroke="#F8F6EE" stroke-width="1.3" fill="none"/><path d="M10 8 L14 5" stroke="#F8F6EE" stroke-width="1.2"/><path d="M4 20 L10 14" stroke="#F8F6EE" stroke-width="1.3"/><path d="M14 14 L18 11" stroke="#F8F6EE" stroke-width="1.1"/></g></svg></div>
<div class="btn" style="left:608px;top:265px;width:71px;height:46px"></div>
<div class="lb" style="left:608px;width:71px;top:295.69px;color:#000">Clos<span class="u">e</span></div>
<div class="ic" style="left:633px;top:270px"><svg width="21" height="22" viewBox="0 0 21 22" style="display:block"><path d="M1 12 L5 9.5 L9 14.5 L17.5 1 L20.5 3.5 L10 21 Z" fill="#3458B8" stroke="#0E2060" stroke-width="1.1" stroke-linejoin="round"/><path d="M10 17 L18 3.5" stroke="#6A8AE0" stroke-width="1.2"/></svg></div>
<div class="btn" style="left:678px;top:265px;width:71px;height:46px"></div>
<div class="lb" style="left:678px;width:71px;top:295.69px;color:#000"><span class="u">H</span>elp</div>
<div class="ic" style="left:700px;top:269px"><svg width="25" height="25" viewBox="0 0 25 25" style="display:block"><defs><radialGradient id="hg" cx="0.35" cy="0.3" r="0.75"><stop offset="0" stop-color="#7AA0F0"/><stop offset="0.6" stop-color="#2A58C0"/><stop offset="1" stop-color="#0E2A7A"/></radialGradient></defs><circle cx="12.2" cy="12" r="11.5" fill="url(#hg)" stroke="#0A2060" stroke-width="1"/><path d="M7.5 9 Q7.5 4.5 12.5 4.5 Q17.5 4.5 17.5 8.5 Q17.5 11 14.5 12.5 Q13.5 13 13.5 15 L10.5 15 Q10.5 12 12.5 10.8 Q14 10 14 8.5 Q14 7.3 12.5 7.3 Q11 7.3 11 9 Z" fill="#fff"/><rect x="10.5" y="16.5" width="3" height="3" fill="#fff"/></svg></div>
<div class="btn" style="left:748px;top:265px;width:71px;height:46px"></div>
<div class="lb" style="left:748px;width:71px;top:295.69px;color:#000">Check Out</div>
<div class="ic" style="left:770.5px;top:266px"><svg width="25" height="25" viewBox="0 0 25 25" style="display:block"><defs><mask id="wmo3" maskUnits="userSpaceOnUse" x="-5" y="-5" width="40" height="40"><rect x="-5" y="-5" width="40" height="40" fill="#fff"/><path d="M17.54 9.14 A1.9 1.9 0 0 1 14.86 6.46 L23.34 -2.03 L26.03 0.66 Z" fill="#000"/></mask><mask id="wmi3" maskUnits="userSpaceOnUse" x="-5" y="-5" width="40" height="40"><rect x="-5" y="-5" width="40" height="40" fill="#fff"/><path d="M18.32 9.92 A3.0 3.0 0 0 1 14.08 5.68 L22.56 -2.81 L26.81 1.44 Z" fill="#000"/></mask></defs><g transform="translate(1,0.5) scale(1.0)"><g mask="url(#wmo3)"><circle cx="16.5" cy="7.5" r="7.6" fill="#7A5800"/><path d="M3.6 20.6 L14 10.5" stroke="#7A5800" stroke-width="8.4" stroke-linecap="round"/></g><g mask="url(#wmi3)"><circle cx="16.5" cy="7.5" r="6.5" fill="#F2CB3C"/><path d="M3.6 20.6 L14 10.5" stroke="#F2CB3C" stroke-width="6.0" stroke-linecap="round"/><path d="M5 18 L13 10.5" stroke="#FBE27A" stroke-width="1.6" stroke-linecap="round"/></g></g><g transform="translate(0,0)"><path d="M6.5 0.5 L12.5 6.5 L9 6.5 L9 14 L4 14 L4 6.5 L0.5 6.5 Z" fill="#3CB83C" stroke="#0A5A0A" stroke-width="1"/><path d="M6.5 2 L10.5 6 L8 6 L8 8 L5 8 L5 6 L2.5 6Z" fill="#7BE07B"/></g></svg></div>
<div class="btn" style="left:953px;top:266px;width:33px;height:33px"></div>
<div class="ic" style="left:962px;top:275px"><svg width="14" height="12" viewBox="0 0 14 12" style="display:block"><rect x="2.5" y="3" width="1.8" height="7" fill="#000"/><path d="M10.5 3 L10.5 10 L4.5 6.5Z" fill="#000"/></svg></div>
<div class="btn" style="left:986px;top:266px;width:33px;height:33px"></div>
<div class="ic" style="left:995px;top:275px"><svg width="14" height="12" viewBox="0 0 14 12" style="display:block"><path d="M9.5 3 L9.5 10 L3.5 6.5Z" fill="#000"/></svg></div>
<div class="btn" style="left:1019px;top:266px;width:33px;height:33px"></div>
<div class="ic" style="left:1028px;top:275px"><svg width="14" height="12" viewBox="0 0 14 12" style="display:block"><path d="M4.5 3 L4.5 10 L10.5 6.5Z" fill="#000"/></svg></div>
<div class="btn" style="left:1052px;top:266px;width:33px;height:33px"></div>
<div class="ic" style="left:1061px;top:275px"><svg width="14" height="12" viewBox="0 0 14 12" style="display:block"><path d="M3.5 3 L3.5 10 L9.5 6.5Z" fill="#000"/><rect x="9.7" y="3" width="1.8" height="7" fill="#000"/></svg></div>
<div class="btn" style="left:1085px;top:266px;width:33px;height:33px"></div>
<div class="ic" style="left:1094px;top:275px"><svg width="14" height="12" viewBox="0 0 14 12" style="display:block"><path d="M10.5 4.5 A3.8 3.8 0 1 0 9 10" stroke="#000" stroke-width="2" fill="none"/><path d="M7 2.5 L12 2.5 L11 7Z" fill="#000"/></svg></div>
<div class="t" style="left:953px;top:310.69px;font-size:11px;font-weight:bold;">Sort <span class="u">O</span>rder</div>
<div class="sunk" style="left:1012px;top:306px;width:113px;height:20px"></div>
<div class="t" style="left:1016px;top:310.19px;font-size:11px;font-weight:bold;">Bar Code</div>
<div class="btn" style="left:1106px;top:308px;width:17px;height:16px"></div>
<div class="ic" style="left:1110px;top:314px"><svg width="9" height="5" viewBox="0 0 9 5" style="display:block"><path d="M0 0 L9 0 L4.5 5Z" fill="#000"/></svg></div>
<div class="t" style="left:1008.4px;top:333.39px;font-size:11px;font-weight:bold;">11</div>
<div class="t" style="left:1075px;top:333.39px;font-size:11px;font-weight:bold;">Records</div>
<div class="a" style="left:254px;top:347px;width:937px;height:1px;background:#ACA899;"></div>
<div class="a" style="left:254px;top:348px;width:937px;height:1px;background:#fff;"></div>
<div class="a" style="left:255px;top:348px;width:51px;height:21px;background:#F4F3EE;border-left:1px solid #716F64;border-top:1px solid #716F64;border-right:1px solid #fff;border-bottom:1px solid #fff"></div>
<div class="t" style="left:269.5px;top:352.77px;font-size:11.5px;"><span class="u">F</span>orm</div>
<div class="btn" style="left:310px;top:348px;width:49px;height:21px"></div>
<div class="lb" style="left:310px;width:49px;top:352.07px;font-size:11.5px;letter-spacing:-0.2px"><span class="u">G</span>rid</div>
<div class="btn" style="left:362px;top:348px;width:83px;height:21px"></div>
<div class="lb" style="left:362px;width:83px;top:352.07px;font-size:11.5px;letter-spacing:-0.2px">A<span class="u">t</span>tachments</div>
<div class="btn" style="left:447px;top:348px;width:87px;height:21px"></div>
<div class="lb" style="left:447px;width:87px;top:352.07px;font-size:11.5px;letter-spacing:-0.2px"><span class="u">M</span>aintenance</div>
<div class="lbl" style="right:932.8px;top:390.69px;font-size:11px;letter-spacing:0.2px;">Serial #</div>
<div class="sunk" style="left:356px;top:386px;width:135px;height:21px;background:#fff"></div>
<div class="a" style="left:358px;top:389px;width:56px;height:14px;background:#316AC5;"></div>
<div class="t" style="left:358.5px;top:390.69px;font-size:11px;font-weight:bold;color:#fff;letter-spacing:-0.1px;">747474774</div>
<div class="lbl" style="right:698.8px;top:390.69px;font-size:11px;letter-spacing:0.2px;">Checked Out</div>
<div class="a" style="left:588px;top:386px;width:68px;height:20px;background:#ECE9D8;border:1px solid #1E1E1E"></div>
<div class="lbl" style="right:597.8px;top:390.69px;font-size:11px;letter-spacing:0.2px;">To</div>
<div class="a" style="left:691px;top:386px;width:212px;height:20px;background:#ECE9D8;border:1px solid #1E1E1E"></div>
<div class="lbl" style="right:932.8px;top:423.69px;font-size:11px;letter-spacing:0.2px;">Ba<span class="u">r</span> Code</div>
<div class="sunk" style="left:356px;top:419px;width:105px;height:21px;background:#fff"></div>
<div class="t" style="left:359px;top:423.69px;font-size:11px;font-weight:bold;">00000001</div>
<div class="lbl" style="right:698.8px;top:423.69px;font-size:11px;letter-spacing:0.2px;">Last Activity</div>
<div class="a" style="left:588px;top:419px;width:68px;height:20px;background:#ECE9D8;border:1px solid #1E1E1E"></div>
<div class="a" style="left:660px;top:419px;width:56px;height:20px;background:#ECE9D8;border:1px solid #1E1E1E"></div>
<div class="t" style="left:591px;top:422.19px;font-size:11px;font-weight:bold;color:#ACA899;letter-spacing:-0.3px;">1/13/2010</div>
<div class="t" style="left:662.5px;top:422.19px;font-size:11px;font-weight:bold;color:#ACA899;letter-spacing:-0.3px;">12:01:39</div>
<div class="lbl" style="right:540.8px;top:423.69px;font-size:11px;letter-spacing:0.2px;">Due</div>
<div class="a" style="left:745px;top:419px;width:59px;height:20px;background:#ECE9D8;border:1px solid #1E1E1E"></div>
<div class="lbl" style="right:412.8px;top:423.69px;font-size:11px;letter-spacing:0.2px;">Reserved</div>
<div class="a" style="left:874px;top:419px;width:29px;height:20px;background:#ECE9D8;border:1px solid #1E1E1E"></div>
<div class="lbl" style="right:286.8px;top:422.84px;font-size:12px;letter-spacing:0.2px;">Record Added</div>
<div class="sunk" style="left:1003px;top:419px;width:119px;height:20px;background:#F4F3EE"></div>
<div class="t" style="left:1006px;top:423.69px;font-size:11px;color:#ACA899;">1/13/2010</div>
<div class="a" style="left:1104px;top:421px;width:17px;height:16px;background:#F4F3EE;border:1px solid #fff;border-right-color:#ACA899;border-bottom-color:#ACA899"></div>
<div class="ic" style="left:1108px;top:427px"><svg width="9" height="5" viewBox="0 0 9 5" style="display:block"><path d="M0 0 L9 0 L4.5 5Z" fill="#ACA899"/></svg></div>
<div class="lbl" style="right:932.8px;top:456.69px;font-size:11px;letter-spacing:0.2px;">Description</div>
<div class="sunk" style="left:356px;top:452px;width:374px;height:21px;background:#fff"></div>
<div class="t" style="left:359px;top:456.69px;font-size:11px;font-weight:bold;">HHP 7850</div>
<div class="lbl" style="right:507.8px;top:456.69px;font-size:11px;letter-spacing:0.2px;">C<span class="u">o</span>st</div>
<div class="sunk" style="left:777px;top:452px;width:68px;height:21px;background:#fff"></div>
<div class="lbl" style="right:442px;top:456.69px">$1,000.00</div>
<div class="lbl" style="right:370.8px;top:456.69px;font-size:11px;letter-spacing:0.2px;">Si<span class="u">z</span>e (cube)</div>
<div class="sunk" style="left:914px;top:452px;width:70px;height:21px;background:#fff"></div>
<div class="lbl" style="right:230.8px;top:456.69px;font-size:11px;letter-spacing:0.2px;"><span class="u">W</span>eight</div>
<div class="sunk" style="left:1054px;top:452px;width:68px;height:21px;background:#fff"></div>
<div class="lbl" style="right:932.8px;top:490.69px;font-size:11px;letter-spacing:0.2px;">Storage</div>
<div class="sunk" style="left:356px;top:486px;width:149px;height:21px;background:#fff"></div>
<div class="t" style="left:359px;top:490.69px;font-size:11px;font-weight:bold;">BIN 02</div>
<div class="btn" style="left:486px;top:488px;width:17px;height:17px"></div>
<div class="ic" style="left:490px;top:494px"><svg width="9" height="5" viewBox="0 0 9 5" style="display:block"><path d="M0 0 L9 0 L4.5 5Z" fill="#000"/></svg></div>
<div class="lbl" style="right:705.8px;top:490.69px;font-size:11px;letter-spacing:0.2px;">C/O Interval</div>
<div class="sunk" style="left:584px;top:486px;width:48px;height:21px;background:#fff"></div>
<div class="lbl" style="right:536.8px;top:490.69px;font-size:11px;letter-spacing:0.2px;">Class</div>
<div class="sunk" style="left:753px;top:486px;width:45px;height:21px;background:#fff"></div>
<div class="t" style="left:756px;top:490.69px;font-size:11px;font-weight:bold;">A</div>
<div class="btn" style="left:779px;top:488px;width:17px;height:17px"></div>
<div class="ic" style="left:783px;top:494px"><svg width="9" height="5" viewBox="0 0 9 5" style="display:block"><path d="M0 0 L9 0 L4.5 5Z" fill="#000"/></svg></div>
<div class="lbl" style="right:932.8px;top:523.69px;font-size:11px;letter-spacing:0.2px;">Tool Type</div>
<div class="sunk" style="left:356px;top:519px;width:331px;height:21px;background:#fff"></div>
<div class="t" style="left:359px;top:523.69px;font-size:11px;font-weight:bold;letter-spacing:-0.4px;">HAND HELD - WIN MOBILE</div>
<div class="lbl" style="right:932.8px;top:557.69px;font-size:11px;letter-spacing:0.2px;">Man<span class="u">u</span>facturer</div>
<div class="sunk" style="left:356px;top:552px;width:331px;height:22px;background:#fff"></div>
<div class="t" style="left:359px;top:556.69px;font-size:11px;font-weight:bold;letter-spacing:-0.6px;">HONEYWELL</div>
<div class="lbl" style="right:932.8px;top:590.69px;font-size:11px;letter-spacing:0.2px;">Part #</div>
<div class="sunk" style="left:356px;top:586px;width:332px;height:21px;background:#fff"></div>
<div class="t" style="left:359px;top:590.69px;font-size:11px;font-weight:bold;letter-spacing:-0.1px;">7850-474747-4948474</div>
<div class="lbl" style="right:932.8px;top:624.69px;font-size:11px;letter-spacing:0.2px;">Tool Stat<span class="u">u</span>s</div>
<div class="sunk" style="left:356px;top:619px;width:169px;height:21px;background:#fff"></div>
<div class="btn" style="left:506px;top:621px;width:17px;height:17px"></div>
<div class="ic" style="left:510px;top:627px"><svg width="9" height="5" viewBox="0 0 9 5" style="display:block"><path d="M0 0 L9 0 L4.5 5Z" fill="#000"/></svg></div>
<div class="lbl" style="right:932.8px;top:657.69px;font-size:11px;letter-spacing:0.2px;">Purchase From</div>
<div class="sunk" style="left:357px;top:651px;width:618px;height:20px;background:#fff"></div>
<div class="t" style="left:361px;top:654.39px;font-size:11px;letter-spacing:-0.4px;-webkit-text-stroke:0.25px #000;">SCAN SOURCE</div>
<div class="lbl" style="right:932.8px;top:691.69px;font-size:11px;letter-spacing:0.2px;letter-spacing:0.5px;">Picture Path</div>
<div class="sunk" style="left:357px;top:687px;width:618px;height:20px;background:#fff"></div>
<div class="t" style="left:359px;top:689.97px;font-size:11.5px;font-weight:bold;letter-spacing:0.4px;">N:\Software Development\Honeywell__HHP___4a1b4be5750e3.jpg</div>
<div class="a" style="left:898px;top:477px;width:208px;height:171px;border:1px solid #fff;border-right-color:#ACA899;border-bottom-color:#ACA899;background:#ECE9D8"></div>
<div class="a" style="left:904px;top:484px;width:195px;height:153px;background:#fff;"></div>
<div class="ic" style="left:904px;top:484px"><svg width="195" height="153" viewBox="0 0 195 153" style="display:block"><defs><linearGradient id="dvs" x1="0" y1="0" x2="1" y2="1"><stop offset="0" stop-color="#1E3AA8"/><stop offset="0.45" stop-color="#3468E0"/><stop offset="1" stop-color="#2448B8"/></linearGradient><linearGradient id="dvh" x1="0" y1="0" x2="1" y2="0"><stop offset="0" stop-color="#3E4146"/><stop offset="0.5" stop-color="#5E6268"/><stop offset="1" stop-color="#50545A"/></linearGradient><linearGradient id="dvt" x1="0" y1="1" x2="1" y2="0"><stop offset="0" stop-color="#555960"/><stop offset="1" stop-color="#62666E"/></linearGradient></defs><path d="M84 100 L124.7 83.5 L112 121 L114 126.4 Q106 136 91.4 138.2 Q82 136 79.6 126.4 Z" fill="#53575E"/><path d="M106.4 95.3 L124.7 83.5 L111.8 121 L99 127.5 Z" fill="#959AA0"/><path d="M99 127.5 L111.8 121 L114 126.4 Q106 136 91.4 138.2 Z" fill="#606469"/><ellipse cx="112" cy="103" rx="1.5" ry="1" fill="#3A3C40"/><ellipse cx="105" cy="122" rx="1.5" ry="1" fill="#3A3C40"/><path d="M4.7 72 Q6 84 9 91.6 Q40 104 60 107.5 L83 105 L107 95 L136 76 L183 55 L192.6 33 L190 31 Q160 52 125 67 Q90 90 60 89 Q30 85 4.7 72 Z" fill="#464A52"/><path d="M4.7 72 Q30 85 60 89 Q90 90 125 67 Q160 52 190 31 L190.5 34 Q160 55 126 71 Q92 93 60 92.5 Q28 88 6 76Z" fill="#6A6E74"/><path d="M30 94 Q60 101 95 93 L126 79 L182 50" stroke="#1E2024" stroke-width="0.9" stroke-dasharray="1.3 1" fill="none"/><path d="M4.7 72 Q4 62 15.5 56.8 L76.4 30.8 L126.4 4.7 Q160 8 187 16.6 L190 31 Q160 52 125 67 Q90 90 60 89 Q30 85 4.7 72 Z" fill="url(#dvt)"/><path d="M8 70 Q8 63 18 58 L75 34 L100 44 L112 58 Q90 80 62 86 Q30 83 8 70Z" fill="#4E525A"/><ellipse cx="27.0" cy="58.0" rx="3" ry="2" fill="#8A8E98"/><ellipse cx="26.5" cy="57.4" rx="1.2" ry="0.7" fill="#C8CCD2"/><ellipse cx="34.4" cy="54.9" rx="3" ry="2" fill="#8A8E98"/><ellipse cx="33.9" cy="54.3" rx="1.2" ry="0.7" fill="#C8CCD2"/><ellipse cx="41.8" cy="51.8" rx="3" ry="2" fill="#8A8E98"/><ellipse cx="41.3" cy="51.2" rx="1.2" ry="0.7" fill="#C8CCD2"/><ellipse cx="49.2" cy="48.7" rx="3" ry="2" fill="#8A8E98"/><ellipse cx="48.7" cy="48.1" rx="1.2" ry="0.7" fill="#C8CCD2"/><ellipse cx="56.6" cy="45.6" rx="3" ry="2" fill="#8A8E98"/><ellipse cx="56.1" cy="45.0" rx="1.2" ry="0.7" fill="#C8CCD2"/><ellipse cx="64.0" cy="42.5" rx="3" ry="2" fill="#8A8E98"/><ellipse cx="63.5" cy="41.9" rx="1.2" ry="0.7" fill="#C8CCD2"/><ellipse cx="33.6" cy="62.6" rx="3" ry="2" fill="#8A8E98"/><ellipse cx="33.1" cy="62.0" rx="1.2" ry="0.7" fill="#C8CCD2"/><ellipse cx="41.0" cy="59.5" rx="3" ry="2" fill="#8A8E98"/><ellipse cx="40.5" cy="58.9" rx="1.2" ry="0.7" fill="#C8CCD2"/><ellipse cx="48.4" cy="56.4" rx="3" ry="2" fill="#8A8E98"/><ellipse cx="47.9" cy="55.8" rx="1.2" ry="0.7" fill="#C8CCD2"/><ellipse cx="55.8" cy="53.3" rx="3" ry="2" fill="#8A8E98"/><ellipse cx="55.3" cy="52.7" rx="1.2" ry="0.7" fill="#C8CCD2"/><ellipse cx="63.2" cy="50.2" rx="3" ry="2" fill="#8A8E98"/><ellipse cx="62.7" cy="49.6" rx="1.2" ry="0.7" fill="#C8CCD2"/><ellipse cx="70.6" cy="47.1" rx="3" ry="2" fill="#8A8E98"/><ellipse cx="70.1" cy="46.5" rx="1.2" ry="0.7" fill="#C8CCD2"/><ellipse cx="40.2" cy="67.2" rx="3" ry="2" fill="#8A8E98"/><ellipse cx="39.7" cy="66.6" rx="1.2" ry="0.7" fill="#C8CCD2"/><ellipse cx="47.6" cy="64.1" rx="3" ry="2" fill="#8A8E98"/><ellipse cx="47.1" cy="63.5" rx="1.2" ry="0.7" fill="#C8CCD2"/><ellipse cx="55.0" cy="61.0" rx="3" ry="2" fill="#8A8E98"/><ellipse cx="54.5" cy="60.4" rx="1.2" ry="0.7" fill="#C8CCD2"/><ellipse cx="62.4" cy="57.9" rx="3" ry="2" fill="#8A8E98"/><ellipse cx="61.9" cy="57.3" rx="1.2" ry="0.7" fill="#C8CCD2"/><ellipse cx="69.8" cy="54.8" rx="3" ry="2" fill="#8A8E98"/><ellipse cx="69.3" cy="54.2" rx="1.2" ry="0.7" fill="#C8CCD2"/><ellipse cx="77.2" cy="51.7" rx="3" ry="2" fill="#8A8E98"/><ellipse cx="76.7" cy="51.1" rx="1.2" ry="0.7" fill="#C8CCD2"/><ellipse cx="46.8" cy="71.8" rx="3" ry="2" fill="#8A8E98"/><ellipse cx="46.3" cy="71.2" rx="1.2" ry="0.7" fill="#C8CCD2"/><ellipse cx="54.2" cy="68.7" rx="3" ry="2" fill="#8A8E98"/><ellipse cx="53.7" cy="68.1" rx="1.2" ry="0.7" fill="#C8CCD2"/><ellipse cx="61.6" cy="65.6" rx="3" ry="2" fill="#8A8E98"/><ellipse cx="61.1" cy="65.0" rx="1.2" ry="0.7" fill="#C8CCD2"/><ellipse cx="69.0" cy="62.5" rx="3" ry="2" fill="#8A8E98"/><ellipse cx="68.5" cy="61.9" rx="1.2" ry="0.7" fill="#C8CCD2"/><ellipse cx="76.4" cy="59.4" rx="3" ry="2" fill="#8A8E98"/><ellipse cx="75.9" cy="58.8" rx="1.2" ry="0.7" fill="#C8CCD2"/><ellipse cx="83.8" cy="56.3" rx="3" ry="2" fill="#8A8E98"/><ellipse cx="83.3" cy="55.7" rx="1.2" ry="0.7" fill="#C8CCD2"/><ellipse cx="53.4" cy="76.4" rx="3" ry="2" fill="#8A8E98"/><ellipse cx="52.9" cy="75.8" rx="1.2" ry="0.7" fill="#C8CCD2"/><ellipse cx="60.8" cy="73.3" rx="3" ry="2" fill="#8A8E98"/><ellipse cx="60.3" cy="72.7" rx="1.2" ry="0.7" fill="#C8CCD2"/><ellipse cx="68.2" cy="70.2" rx="3" ry="2" fill="#8A8E98"/><ellipse cx="67.7" cy="69.6" rx="1.2" ry="0.7" fill="#C8CCD2"/><ellipse cx="75.6" cy="67.1" rx="3" ry="2" fill="#8A8E98"/><ellipse cx="75.1" cy="66.5" rx="1.2" ry="0.7" fill="#C8CCD2"/><ellipse cx="83.0" cy="64.0" rx="3" ry="2" fill="#8A8E98"/><ellipse cx="82.5" cy="63.4" rx="1.2" ry="0.7" fill="#C8CCD2"/><ellipse cx="90.4" cy="60.9" rx="3" ry="2" fill="#8A8E98"/><ellipse cx="89.9" cy="60.3" rx="1.2" ry="0.7" fill="#C8CCD2"/><ellipse cx="60.0" cy="81.0" rx="3" ry="2" fill="#8A8E98"/><ellipse cx="59.5" cy="80.4" rx="1.2" ry="0.7" fill="#C8CCD2"/><ellipse cx="67.4" cy="77.9" rx="3" ry="2" fill="#8A8E98"/><ellipse cx="66.9" cy="77.3" rx="1.2" ry="0.7" fill="#C8CCD2"/><ellipse cx="74.8" cy="74.8" rx="3" ry="2" fill="#8A8E98"/><ellipse cx="74.3" cy="74.2" rx="1.2" ry="0.7" fill="#C8CCD2"/><ellipse cx="82.2" cy="71.7" rx="3" ry="2" fill="#8A8E98"/><ellipse cx="81.7" cy="71.1" rx="1.2" ry="0.7" fill="#C8CCD2"/><ellipse cx="89.6" cy="68.6" rx="3" ry="2" fill="#8A8E98"/><ellipse cx="89.1" cy="68.0" rx="1.2" ry="0.7" fill="#C8CCD2"/><ellipse cx="97.0" cy="65.5" rx="3" ry="2" fill="#8A8E98"/><ellipse cx="96.5" cy="64.9" rx="1.2" ry="0.7" fill="#C8CCD2"/><path d="M76 31 L127 5 L187 17 L188 30 L134 57 L118 58 Z" fill="#5E626A"/><path d="M82 36.7 L131 11.2 L172.7 18.3 L133 53 Z" fill="url(#dvs)"/><path d="M100 30 L131 14 L165 20 L140 34 Z" fill="#5AA0F0" opacity="0.45"/><path d="M108 24 L150 31 M104 32 L140 40 M95 35 L128 46" stroke="#A8D4FF" stroke-width="0.6" opacity="0.7"/><circle cx="105.5" cy="58" r="3.2" fill="#3CC060"/><circle cx="104.8" cy="57.3" r="1.3" fill="#9AF0A8"/><path d="M9 85 L39 100 L38 104 L12 94 Z" fill="#25272B"/><path d="M12 88 L36 100" stroke="#7A7E84" stroke-width="0.7"/><path d="M83 133 Q72 142 60 147 Q52 151 56 152 Q64 152 72 146 Q80 140 85 135" stroke="#151515" stroke-width="1.5" fill="none"/><rect x="81.5" y="128" width="4.5" height="5" fill="#D83020"/></svg></div>
<div class="btn" style="left:978px;top:674px;width:71px;height:46px"></div>
<div class="lb" style="left:978px;width:71px;top:706.69px;color:#ACA899">Browse</div>
<div class="ic" style="left:1002px;top:678px"><svg width="32" height="26" viewBox="0 0 32 26" style="display:block"><g opacity="0.8"><path d="M12 2 Q6 10 5 22" stroke="#F8F6EE" stroke-width="1.4" fill="none"/><path d="M16 4 Q11 12 10 20" stroke="#F8F6EE" stroke-width="1.4" fill="none"/><path d="M15 12 L22 12" stroke="#F8F6EE" stroke-width="1.1"/><path d="M13 18 L18 18" stroke="#F8F6EE" stroke-width="1.1"/></g></svg></div>
</body></html>
